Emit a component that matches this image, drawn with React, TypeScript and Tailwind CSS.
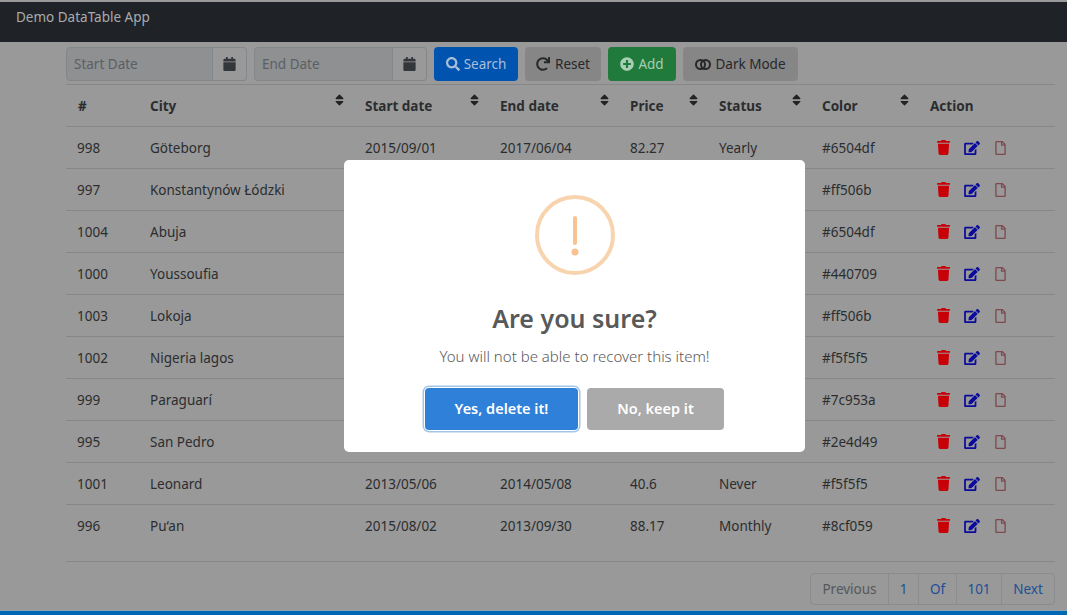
import React from "react";
import { FaCalendar, FaSearch, FaRedo, FaPlusCircle, FaSort, FaTrash, FaEdit, FaRegFile } from "react-icons/fa";

const rows: [string, string, string, string, string, string, string][] = [
  ["998", "Göteborg", "2015/09/01", "2017/06/04", "82.27", "Yearly", "#6504df"],
  ["997", "Konstantynów Łódzki", "", "", "", "", "#ff506b"],
  ["1004", "Abuja", "", "", "", "", "#6504df"],
  ["1000", "Youssoufia", "", "", "", "", "#440709"],
  ["1003", "Lokoja", "", "", "", "", "#ff506b"],
  ["1002", "Nigeria lagos", "", "", "", "", "#f5f5f5"],
  ["999", "Paraguarí", "", "", "", "", "#7c953a"],
  ["995", "San Pedro", "", "", "", "", "#2e4d49"],
  ["1001", "Leonard", "2013/05/06", "2014/05/08", "40.6", "Never", "#f5f5f5"],
  ["996", "Pu‘an", "2015/08/02", "2013/09/30", "88.17", "Monthly", "#8cf059"],
];

const heads: [string, string, boolean][] = [
  ["#", "w-[72px]", false],
  ["City", "w-[215px]", true],
  ["Start date", "w-[135px]", true],
  ["End date", "w-[130px]", true],
  ["Price", "w-[89px]", true],
  ["Status", "w-[103px]", true],
  ["Color", "w-[108px]", true],
  ["Action", "w-[137px]", false],
];

function DateField({ label, w }: { label: string; w: string }) {
  return (
    <div className={`flex h-[34px] ${w}`}>
      <div className="flex flex-1 items-center rounded-l-[4px] border border-[#84878a] bg-[#8e9092] pl-[7px] text-[#5c5f62]">{label}</div>
      <div className="flex w-[34px] items-center justify-center rounded-r-[4px] border border-l-0 border-[#84878a] text-[#33363a]">
        <FaCalendar className="h-[14px] w-[13px]" />
      </div>
    </div>
  );
}

export default function App() {
  return (
    <div className="relative flex h-[615px] w-[1067px] flex-col overflow-hidden bg-[#999999] pt-[2px] font-['Noto_Sans','Open_Sans',sans-serif] text-[13.5px] text-[#2b2d2f]">
      <header className="h-[40px] shrink-0 bg-[#1f2327] pl-[16px] pt-[5px] text-[13.5px] leading-[20px] text-[#a9abad]">Demo DataTable App</header>

      <main className="flex flex-1 flex-col pl-[66px] pr-[12px] pt-[5px]">
        <div className="flex h-[34px] gap-[7px]">
          <DateField label="Start Date" w="w-[181px]" />
          <DateField label="End Date" w="w-[173px]" />
          <button className="flex w-[84px] items-center justify-center gap-[4px] rounded-[4px] bg-[#0054b0] text-[#a8bfd9]"><FaSearch className="h-[14px] w-[14px]" />Search</button>
          <button className="flex w-[76px] items-center justify-center gap-[5px] rounded-[4px] bg-[#868686] text-[#26282a]"><FaRedo className="h-[14px] w-[14px]" />Reset</button>
          <button className="flex w-[68px] items-center justify-center gap-[4px] rounded-[4px] bg-[#1f7a3c] text-[#a8ceb4]"><FaPlusCircle className="h-[14px] w-[14px]" />Add</button>
          <button className="flex w-[115px] items-center justify-center gap-[4px] rounded-[4px] bg-[#868686] text-[#26282a]">
            <svg viewBox="0 0 16 11" className="h-[11px] w-[16px]" fill="none" stroke="currentColor" strokeWidth="2"><circle cx="5.5" cy="5.5" r="4.5" /><circle cx="10.5" cy="5.5" r="4.5" /></svg>
            Dark Mode
          </button>
        </div>

        <table className="mt-[3px] w-[989px] table-fixed border-collapse">
          <thead>
            <tr className="h-[42px] border-y border-[#858789]">
              {heads.map(([h, w, sort]) => (
                <th key={h} className={`${w} pl-[12px] pr-[9px] text-left align-middle font-bold`}>
                  <div className="flex items-start justify-between">
                    <span className="pt-[1px]">{h}</span>
                    {sort && <FaSort className="-mt-[2px] h-[14px] w-[9px] text-[#202224]" />}
                  </div>
                </th>
              ))}
            </tr>
          </thead>
          <tbody>
            {rows.map((r) => (
              <tr key={r[0]} className="h-[42px] border-b border-[#858789] last:border-transparent">
                {r.map((c, i) => (
                  <td key={i} className={i === 0 ? "pl-[11px] pt-[2px]" : "pl-[12px] pt-[2px]"}>{c}</td>
                ))}
                <td className="pl-[19px]">
                  <div className="flex items-center">
                    <FaTrash className="h-[15px] w-[13px] text-[#c80008]" />
                    <FaEdit className="ml-[14px] h-[14px] w-[16px] text-[#0a0a9c]" />
                    <FaRegFile className="ml-[15px] h-[14px] w-[11px] text-[#7d4a4e]" />
                  </div>
                </td>
              </tr>
            ))}
          </tbody>
        </table>

        <div className="mt-[14px] h-px w-[989px] bg-[#858789]" />

        <nav className="mt-[11px] flex h-[32px] w-[989px] justify-end">
          <div className="flex rounded-[4px] border border-[#8a8c8e] text-[#1f4f96]">
            <span className="flex w-[77px] items-center justify-center text-[#54585c]">Previous</span>
            <span className="flex w-[30px] items-center justify-center border-l border-[#8a8c8e]">1</span>
            <span className="flex w-[38px] items-center justify-center border-l border-[#8a8c8e]">Of</span>
            <span className="flex w-[45px] items-center justify-center border-l border-[#8a8c8e]">101</span>
            <span className="flex w-[53px] items-center justify-center border-l border-[#8a8c8e]">Next</span>
          </div>
        </nav>
      </main>

      <footer className="h-[5px] shrink-0 border-t border-[#8fa3b3] bg-[#0069b5]" />

      <div className="absolute left-[344px] top-[160px] flex h-[292px] w-[461px] flex-col items-center rounded-[5px] bg-white">
        <svg viewBox="0 0 80 80" className="mt-[35px] h-[80px] w-[80px]" fill="none">
          <circle cx="40" cy="40" r="38" stroke="#f8d4ae" strokeWidth="4" />
          <rect x="38" y="21" width="4" height="29" rx="2" fill="#f8c291" />
          <circle cx="40" cy="57" r="3.5" fill="#f8c291" />
        </svg>
        <h2 className="mt-[25px] text-[25px] font-semibold leading-[36px] text-[#595959]">Are you sure?</h2>
        <p className="mt-[10px] text-[15px] font-light leading-[20px] text-[#5a5a5a]">You will not be able to recover this item!</p>
        <div className="mt-[22px] flex gap-[9px]">
          <button className="h-[42px] w-[153px] rounded-[4px] bg-[#2f80d8] text-[14.5px] font-semibold text-white shadow-[0_0_0_1px_#ffffff,0_0_0_2.5px_#a3c6e8]">Yes, delete it!</button>
          <button className="h-[42px] w-[137px] rounded-[4px] bg-[#aaaaaa] text-[14.5px] font-semibold text-white">No, keep it</button>
        </div>
      </div>
    </div>
  );
}
